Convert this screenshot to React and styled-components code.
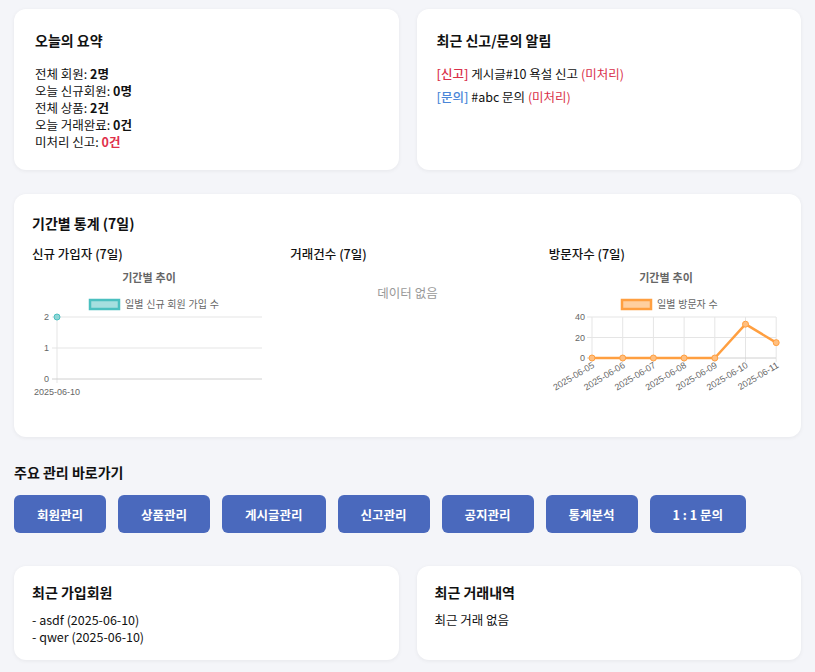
import styled, { createGlobalStyle } from "styled-components";

const GlobalStyle = createGlobalStyle`
  body {
    margin: 0;
    background: #f4f5f9;
    font-family: "Noto Sans CJK KR", "Noto Sans", sans-serif;
    color: #111;
  }
`;

const Page = styled.div`
  padding: 9px 14px 12px;
`;

const Row = styled.div`
  display: grid;
  grid-template-columns: 1fr 1fr;
  gap: 18px;
  margin-bottom: ${(props) => props.$mb || 0}px;
`;

const Card = styled.div`
  background: #fff;
  border-radius: 12px;
  box-shadow: 0 1px 4px rgba(0, 0, 0, 0.06);
  padding: ${(props) => props.$pad || "20px 18px"};
  min-height: ${(props) => props.$minH || 0}px;
  box-sizing: border-box;
  margin-bottom: ${(props) => props.$mb || 0}px;
`;

const Title = styled.h3`
  margin: 0 0 ${(props) => (props.$mb !== undefined ? props.$mb : 14)}px;
  font-size: 14px;
  font-weight: 700;
  line-height: 22px;
`;

const Line = styled.div`
  font-size: 12.5px;
  line-height: 17px;
`;

const Alert = styled.div`
  font-size: 12.5px;
  line-height: 17px;
  margin-bottom: 6px;
`;

const Tag = styled.span`
  color: ${(props) => (props.$blue ? "#4a86d8" : "#d9304a")};
  font-weight: 500;
`;

const Status = styled.span`
  color: #d9304a;
`;

const Strong = styled.b`
  color: ${(props) => (props.$red ? "#e0304b" : "#111")};
`;

const Columns = styled.div`
  display: grid;
  grid-template-columns: repeat(3, 1fr);
  gap: 24px;
`;

const ColTitle = styled.div`
  font-size: 12.5px;
  font-weight: 500;
  line-height: 18px;
  margin-bottom: 3px;
`;

const Empty = styled.div`
  text-align: center;
  color: #999;
  font-size: 12.5px;
  margin-top: 20px;
`;

const SectionTitle = styled.h3`
  margin: 0 0 12px;
  font-size: 14px;
  font-weight: 700;
  line-height: 22px;
`;

const Buttons = styled.div`
  display: flex;
  gap: 12px;
  margin-bottom: 33px;
`;

const Btn = styled.button`
  background: #4a69bd;
  color: #fff;
  border: none;
  border-radius: 6px;
  height: 38px;
  padding: 0 23px;
  font-family: inherit;
  font-size: 12.5px;
  font-weight: 700;
  cursor: pointer;
`;

const CHART_FONT = `"Liberation Sans", "Noto Sans CJK KR", sans-serif`;

const ChartHead = ({ cx, label, boxX, textX, stroke, fill }) => (
  <g fontFamily={CHART_FONT}>
    <text x={cx} y={16} textAnchor="middle" fontSize="11" fontWeight="700" fill="#666">
      기간별 추이
    </text>
    <rect x={boxX} y={34} width={29} height={9} fill={fill} stroke={stroke} strokeWidth="2.5" />
    <text x={textX} y={42} fontSize="10" fill="#666">
      {label}
    </text>
  </g>
);

const SignupChart = () => (
  <svg width="233" height="135" style={{ display: "block" }}>
    <ChartHead cx={117} label="일별 신규 회원 가입 수" boxX={58} textX={93} stroke="#4bc0c0" fill="#a5dfdf" />
    <g stroke="#e5e5e5" strokeWidth="1">
      <line x1="20" y1="51" x2="230" y2="51" />
      <line x1="20" y1="82" x2="230" y2="82" />
      <line x1="25" y1="51" x2="25" y2="117" />
    </g>
    <line x1="20" y1="113" x2="230" y2="113" stroke="#d0d0d0" />
    <g fontFamily={CHART_FONT} fontSize="9" fill="#666" textAnchor="end">
      <text x="17" y="54">2</text>
      <text x="17" y="85">1</text>
      <text x="17" y="116">0</text>
    </g>
    <text x="25" y="129" fontFamily={CHART_FONT} fontSize="9" fill="#666" textAnchor="middle">
      2025-06-10
    </text>
    <circle cx="25" cy="51" r="3" fill="#8fd6d6" stroke="#4bc0c0" />
  </svg>
);

const visits = [0, 0, 0, 0, 0, 33, 15];
const dates = ["2025-06-05", "2025-06-06", "2025-06-07", "2025-06-08", "2025-06-09", "2025-06-10", "2025-06-11"];

const VisitChart = () => {
  const x0 = 43;
  const step = 30.7;
  const yOf = (v) => 92 - (v * 41) / 40;
  const pts = visits.map((v, i) => `${x0 + i * step},${yOf(v)}`).join(" ");
  return (
    <svg width="233" height="135" style={{ display: "block" }}>
      <ChartHead cx={117} label="일별 방문자 수" boxX={73} textX={108} stroke="#ff9f40" fill="#ffcf9f" />
      <g stroke="#e5e5e5" strokeWidth="1">
        <line x1={x0 - 5} y1="51" x2="227" y2="51" />
        <line x1={x0 - 5} y1="71.5" x2="227" y2="71.5" />
        {visits.map((_, i) => (
          <line key={i} x1={x0 + i * step} y1="51" x2={x0 + i * step} y2="96" />
        ))}
      </g>
      <line x1={x0 - 5} y1="92" x2="227" y2="92" stroke="#d0d0d0" />
      <g fontFamily={CHART_FONT} fontSize="9" fill="#666" textAnchor="end">
        <text x="36" y="54">40</text>
        <text x="36" y="75">20</text>
        <text x="36" y="95">0</text>
      </g>
      <polyline points={pts} fill="none" stroke="#ff9f40" strokeWidth="2.5" strokeLinejoin="round" />
      {visits.map((v, i) => (
        <circle key={i} cx={x0 + i * step} cy={yOf(v)} r="3" fill="#ffbf80" stroke="#ff9f40" />
      ))}
      <g fontFamily={CHART_FONT} fontSize="9" fill="#666" textAnchor="end">
        {dates.map((d, i) => (
          <text key={d} transform={`translate(${x0 + i * step + 3},${101}) rotate(-31)`}>
            {d}
          </text>
        ))}
      </g>
    </svg>
  );
};

const App = () => (
  <Page>
    <GlobalStyle />
    <Row $mb={24}>
      <Card $minH={161} $pad="20px 21px">
        <Title>오늘의 요약</Title>
        <Line>
          전체 회원: <Strong>2명</Strong>
        </Line>
        <Line>
          오늘 신규회원: <Strong>0명</Strong>
        </Line>
        <Line>
          전체 상품: <Strong>2건</Strong>
        </Line>
        <Line>
          오늘 거래완료: <Strong>0건</Strong>
        </Line>
        <Line>
          미처리 신고: <Strong $red>0건</Strong>
        </Line>
      </Card>
      <Card $minH={161} $pad="20px 20px">
        <Title>최근 신고/문의 알림</Title>
        <Alert>
          <Tag>[신고]</Tag> 게시글#10 욕설 신고 <Status>(미처리)</Status>
        </Alert>
        <Alert>
          <Tag $blue>[문의]</Tag> #abc 문의 <Status>(미처리)</Status>
        </Alert>
      </Card>
    </Row>

    <Card $minH={243} $mb={24} $pad="18px 18px">
      <Title $mb={11}>기간별 통계 (7일)</Title>
      <Columns>
        <div>
          <ColTitle>신규 가입자 (7일)</ColTitle>
          <SignupChart />
        </div>
        <div>
          <ColTitle>거래건수 (7일)</ColTitle>
          <Empty>데이터 없음</Empty>
        </div>
        <div>
          <ColTitle>방문자수 (7일)</ColTitle>
          <VisitChart />
        </div>
      </Columns>
    </Card>

    <SectionTitle>주요 관리 바로가기</SectionTitle>
    <Buttons>
      {["회원관리", "상품관리", "게시글관리", "신고관리", "공지관리", "통계분석", "1 : 1 문의"].map((b) => (
        <Btn key={b}>{b}</Btn>
      ))}
    </Buttons>

    <Row>
      <Card $minH={94} $pad="15px 18px">
        <Title $mb={8}>최근 가입회원</Title>
        <Line>- asdf (2025-06-10)</Line>
        <Line>- qwer (2025-06-10)</Line>
      </Card>
      <Card $minH={94} $pad="15px 18px">
        <Title $mb={8}>최근 거래내역</Title>
        <Line>최근 거래 없음</Line>
      </Card>
    </Row>
  </Page>
);

export default App;
